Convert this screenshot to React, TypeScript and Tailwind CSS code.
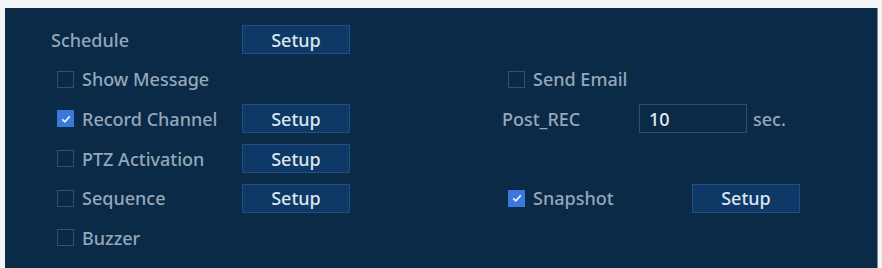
import React from 'react'

const font = { fontFamily: '"Noto Sans", "Open Sans", sans-serif' }

function Check({ on }: { on?: boolean }) {
  if (on)
    return (
      <span className="flex h-[17px] w-[17px] items-center justify-center bg-[#3a78dc]">
        <svg width="12" height="12" viewBox="0 0 12 12">
          <path d="M2.2 6.3 L4.9 8.8 L9.8 3.4" fill="none" stroke="#e8f0fb" strokeWidth="1.8" />
        </svg>
      </span>
    )
  return <span className="h-[17px] w-[17px] border border-[#34506f] bg-[#0b2845]" />
}

function Btn() {
  return (
    <div className="flex h-[29px] w-[108px] items-center justify-center border border-[#1f4f85] bg-[#0e3866] text-[#dde6f0]">
      Setup
    </div>
  )
}

function Box({ on, label, w = 185 }: { on?: boolean; label: string; w?: number }) {
  return (
    <div className="flex items-center pl-[6px]" style={{ width: w }}>
      <Check on={on} />
      <span className="ml-[8px] text-[#95a7ba]">{label}</span>
    </div>
  )
}

export default function App() {
  return (
    <div className="h-[268px] w-[882px] bg-[#f3f4f5] pt-[8px] pl-[5px] pr-[4px]" style={font}>
      <div className="h-full w-full bg-[#0a2a47] pl-[46px] pt-[12px] text-[18px] font-medium leading-none border-r border-[#7d8a96]">
        <div className="flex h-[39.6px] items-center">
          <span className="w-[191px] text-[#95a7ba]">Schedule</span>
          <Btn />
        </div>
        <div className="flex h-[39.6px] items-center">
          <div className="w-[451px]"><Box label="Show Message" /></div>
          <Box label="Send Email" />
        </div>
        <div className="flex h-[39.6px] items-center">
          <div className="flex w-[451px] items-center">
            <Box on label="Record Channel" w={191} />
            <Btn />
          </div>
          <span className="w-[137px] text-[#95a7ba]">Post_REC</span>
          <div className="flex h-[29px] w-[108px] items-center border border-[#24507f] bg-[#0a2a47] pl-[9px] text-[#e4ebf2]">10</div>
          <span className="ml-[6px] text-[#95a7ba]">sec.</span>
        </div>
        <div className="flex h-[39.6px] items-center">
          <Box label="PTZ Activation" w={191} />
          <Btn />
        </div>
        <div className="flex h-[39.6px] items-center">
          <div className="flex w-[451px] items-center">
            <Box label="Sequence" w={191} />
            <Btn />
          </div>
          <Box on label="Snapshot" w={190} />
          <Btn />
        </div>
        <div className="flex h-[39.6px] items-center">
          <Box label="Buzzer" />
        </div>
      </div>
    </div>
  )
}
